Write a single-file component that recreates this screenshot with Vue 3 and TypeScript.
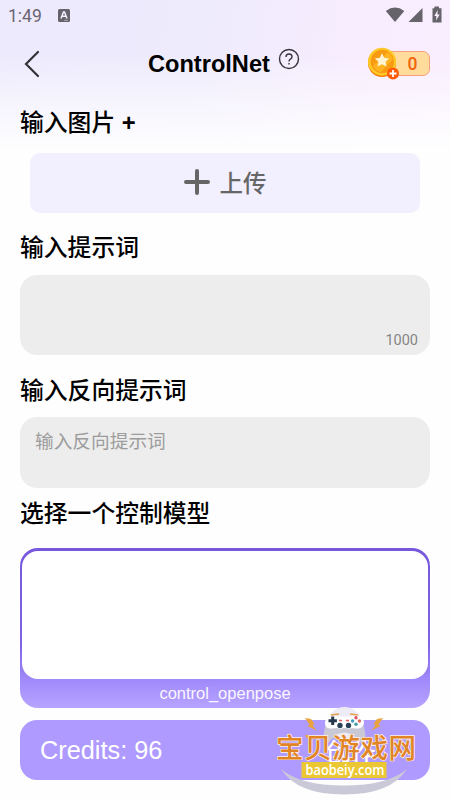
<script setup lang="ts">
import { ref } from 'vue';

const time = ref<string>('1:49');
const coins = ref<number>(0);
const prompt = ref<string>('');
const negativePrompt = ref<string>('');
const maxPromptLength = 1000;
const modelName = ref<string>('control_openpose');
const credits = ref<number>(96);
</script>
<template>
  <div class="page">
    <div class="status-bar">
      <span class="time">{{ time }}</span>
      <svg class="keyboard-icon" width="12" height="13" viewBox="0 0 12 13">
        <rect width="12" height="13" rx="1.5" fill="#67636d" />
        <path d="M3 9.5 L5.5 3 H6.5 L9 9.5 M4 7.3 H8" fill="none" stroke="#f3f0ff" stroke-width="1.5" />
        <path d="M6 11.3 H10" stroke="#bbb7c4" stroke-width="0.8" />
      </svg>
      <svg class="signal-icons" width="58" height="18" viewBox="0 0 58 18">
        <g fill="#67636b">
          <path d="M0.8 5 Q10 -1.8 19.3 5 L10 16 Z" />
          <path d="M23.5 16 L37.5 2 V16 Z" />
          <path d="M47.5 2.2 H49.4 V0.5 H54 V2.2 H56.5 V16.5 H47.5 Z" />
        </g>
        <path d="M52.8 4 L49.3 10 H51.4 L51 14.5 L54.7 8.4 H52.4 Z" fill="#fbf0ff" />
      </svg>
    </div>
    <header class="header">
      <svg class="back-icon" width="16" height="28" viewBox="0 0 16 28">
        <path d="M14 2 L2 14 L14 26" />
      </svg>
      <h1 class="title">ControlNet</h1>
      <svg class="help-icon" width="22" height="22" viewBox="0 0 22 22">
        <circle cx="11" cy="11" r="9.5" />
        <path d="M8 9 Q8 6 11 6 Q14 6 14 8.7 Q14 10.2 12.4 11.2 Q11 12 11 13.4" />
        <path d="M11 14.9 V16.5" />
      </svg>
      <div class="coins">
        <div class="coin-count">{{ coins }}</div>
        <svg class="coin-icon" width="33" height="34" viewBox="0 0 33 34">
          <circle cx="15" cy="16" r="14" fill="#f47a0b" />
          <circle cx="15" cy="14.7" r="14" fill="#ffca28" />
          <circle cx="15.3" cy="14.5" r="11.7" fill="#f99b12" />
          <path d="M6 19 L21 5 Q25 8 26 12 L14 25 Q8 24 6 19" fill="#ffb321" />
          <path
            d="M15 6.2 L17.2 10.7 L22.2 11.4 L18.6 14.8 L19.5 19.6 L15 17.3 L10.5 19.6 L11.4 14.8 L7.8 11.4 L12.8 10.7 Z"
            fill="#fff4cf"
          />
          <circle cx="26" cy="26.5" r="6" fill="#ff5b08" />
          <path d="M22.5 26.5 H29.5 M26 23 V30" stroke="#fff" stroke-width="1.8" />
        </svg>
      </div>
    </header>
    <main class="content">
      <h2 class="label label-image">输入图片 <span class="plus">+</span></h2>
      <button class="upload-button">
        <svg width="26" height="26" viewBox="0 0 26 26">
          <path d="M2 13 H24 M13 2 V24" />
        </svg>
        <span>上传</span>
      </button>
      <h2 class="label label-prompt">输入提示词</h2>
      <div class="prompt-box">
        <textarea v-model="prompt" class="prompt-input" :maxlength="maxPromptLength"></textarea>
        <span class="counter">{{ maxPromptLength - prompt.length }}</span>
      </div>
      <h2 class="label label-negative">输入反向提示词</h2>
      <textarea v-model="negativePrompt" class="negative-input" placeholder="输入反向提示词"></textarea>
      <h2 class="label label-model">选择一个控制模型</h2>
      <div class="model-card">
        <div class="model-preview"></div>
        <span class="model-name">{{ modelName }}</span>
      </div>
      <div class="create-bar">
        <span>Credits: {{ credits }}</span>
        <span class="create-text">创作</span>
      </div>
    </main>
    <svg class="watermark" width="160" height="100" viewBox="0 0 160 100">
      <circle cx="74.5" cy="24" r="17" fill="#edebf6" />
      <!-- game pad -->
      <path
        d="M60 17 H89 Q93 19 95 32 Q97 46 90 42 L83 35 Q74 30 66 35 L59 42 Q52 46 54 32 Q56 19 60 17"
        fill="#c9c9d6"
      />
      <path
        d="M60 16 Q64 14.500 67 16.500 H82 Q85 14.500 89 16 Q94 18 94 23 Q93 29 86 28.500 L81 28 Q79 30 76 28 H73 Q70 30 67.500 28 L62 28.500 Q55 29 55 23 Q55 18 60 16"
        fill="#fff"
      />
      <path d="M61 15 L69 14 M80 14 L88 15" stroke="#e2a04b" stroke-width="1.6" />
      <path d="M58.5 20.8 H66.9 M62.7 16.6 V25" stroke="#24394c" stroke-width="3" />
      <g fill="#294156">
        <circle cx="70" cy="25.5" r="2.7" />
        <circle cx="78.5" cy="25.5" r="2.7" />
      </g>
      <circle cx="86" cy="17.8" r="1.7" fill="#e05068" />
      <circle cx="82.6" cy="21" r="1.7" fill="#3e9cc0" />
      <circle cx="89.4" cy="21" r="1.7" fill="#e06a5c" />
      <circle cx="86" cy="24.2" r="1.7" fill="#3d9eaa" />
      <path d="M69 20.5 H72 M76 20.5 H79" stroke="#e05b60" stroke-width="1.3" />
      <g fill="#eba23c">
        <path d="M35 18 L41 19 L44.500 24 L42.500 25 L46.500 30.500 L37.500 26 L39.500 24.500 Z" />
        <path d="M113 18 L107 19 L103.500 24 L105.500 25 L101.500 30.500 L110.500 26 L108.500 24.500 Z" />
        <path d="M35 35 L40 35 L44 39.500 L36.500 38 Z M113 35 L108 35 L104 39.500 L111.500 38 Z" />
      </g>
      <path d="M11 69 Q27 94.500 74 94.500 Q121 94.500 137 69 Q118 85.500 74 85.500 Q30 85.500 11 69" fill="#c9c9d8" />
      <text class="site-name" x="6" y="57.5" textLength="140">宝贝游戏网</text>
      <rect x="31.5" y="62" width="85" height="16" fill="#ebc833" />
      <text class="site-url" x="35.5" y="74.5" textLength="79" lengthAdjust="spacingAndGlyphs">baobeiy.com</text>
    </svg>
  </div>
</template>
<style>
body {
  margin: 0;
  overflow: hidden;
}
</style>
<style scoped>
.page {
  position: relative;
  display: flex;
  flex-direction: column;
  box-sizing: border-box;
  width: 450px;
  height: 800px;
  overflow: hidden;
  background:
    linear-gradient(to bottom, rgba(254, 254, 254, 0) 55px, #fefefe 150px),
    linear-gradient(100deg, #edeafd 0%, #eeebfd 35%, #f8edfe 65%, #fbf0ff 100%);
  font-family: 'Liberation Sans', 'Noto Sans CJK SC', sans-serif;
}
.status-bar {
  display: flex;
  align-items: center;
  height: 32px;
  padding: 0 8px;
}
.time {
  color: #6a6672;
  font-family: Roboto, sans-serif;
  font-size: 17.5px;
}
.keyboard-icon {
  margin: -2px 0 0 16px;
}
.signal-icons {
  margin: -2px -1px 0 auto;
}
.header {
  display: flex;
  align-items: center;
  height: 62px;
  padding: 0 20px 0 24px;
}
.back-icon {
  margin-top: 1px;
}
.back-icon path {
  fill: none;
  stroke: #35333a;
  stroke-width: 2.2;
  stroke-linecap: round;
}
.title {
  margin: 2px 0 0 108px;
  font-size: 23.6px;
  font-weight: bold;
}
.help-icon {
  margin: -9px 0 0 8px;
  fill: none;
  stroke: #37343c;
  stroke-width: 1.4;
}
.coins {
  position: relative;
  margin-left: auto;
}
.coin-count {
  box-sizing: border-box;
  width: 50px;
  height: 25px;
  padding-left: 15px;
  border: 1px solid #f5a07c;
  border-radius: 7px;
  background: #ffdb9c;
  color: #f1640f;
  font-family: Roboto, sans-serif;
  font-size: 17.5px;
  font-weight: 500;
  line-height: 24px;
  text-align: center;
}
.coin-icon {
  position: absolute;
  top: -4px;
  left: -13px;
}
.content {
  display: flex;
  flex-direction: column;
  padding: 0 20px;
}
.label {
  height: 34px;
  margin: 0;
  font-size: 23.8px;
  font-weight: 500;
  line-height: 34px;
}
.label-image {
  margin-top: 12px;
}
.plus {
  font-weight: bold;
}
.upload-button {
  display: flex;
  align-items: center;
  justify-content: center;
  gap: 10px;
  height: 60px;
  margin: 13px 10px 0;
  padding: 0 0 2px;
  border: none;
  border-radius: 10px;
  background: #f2effe;
  color: #666;
  font-family: inherit;
  font-size: 23.5px;
  font-weight: 500;
}
.upload-button path {
  stroke: #666;
  stroke-width: 4;
  stroke-linecap: round;
}
.label-prompt {
  margin-top: 18px;
}
.prompt-box {
  display: flex;
  flex-direction: column;
  box-sizing: border-box;
  height: 80px;
  margin-top: 10px;
  padding: 8px 12px 5px;
  border-radius: 17px;
  background: #ededed;
}
.prompt-input {
  flex: 1;
  min-height: 0;
  padding: 0;
  border: none;
  outline: none;
  background: none;
  resize: none;
}
.counter {
  align-self: flex-end;
  color: #858585;
  font-family: Roboto, sans-serif;
  font-size: 14.5px;
  line-height: 19px;
}
.label-negative {
  margin-top: 19px;
}
.negative-input {
  box-sizing: border-box;
  height: 71px;
  margin-top: 9px;
  padding: 11px 15px;
  border: none;
  border-radius: 17px;
  outline: none;
  background: #ededed;
  font-family: inherit;
  font-size: 18.7px;
  line-height: 27px;
  resize: none;
}
.negative-input::placeholder {
  color: #9c9c9c;
}
.label-model {
  margin-top: 9px;
}
.model-card {
  display: flex;
  flex-direction: column;
  box-sizing: border-box;
  height: 160px;
  margin-top: 17px;
  padding: 3px 2px 0;
  border-radius: 18px;
  background: linear-gradient(to bottom, #7657dd 0%, #7f63e5 60%, #a58ffc 86%, #b7a4ff 100%);
}
.model-preview {
  flex: none;
  height: 128px;
  border-radius: 16px;
  background: #fff;
}
.model-name {
  color: #f9f6ff;
  font-size: 16.5px;
  line-height: 29px;
  text-align: center;
}
.create-bar {
  display: flex;
  align-items: center;
  justify-content: space-between;
  height: 60px;
  margin-top: 12px;
  padding: 0 54px 0 20px;
  border-radius: 17px;
  background: #af9aff;
  color: #fff;
  font-size: 25.3px;
}
.create-text {
  font-weight: 500;
}
.watermark {
  position: absolute;
  top: 700px;
  left: 270px;
}
.site-name {
  fill: #e08426;
  stroke: #fff0e4;
  stroke-width: 1.4px;
  paint-order: stroke;
  font-family: 'Noto Sans CJK SC', sans-serif;
  font-size: 27.5px;
  font-weight: 500;
}
.site-url {
  fill: #fff;
  font-family: 'Open Sans', sans-serif;
  font-size: 14.5px;
  font-weight: 600;
}
</style>
